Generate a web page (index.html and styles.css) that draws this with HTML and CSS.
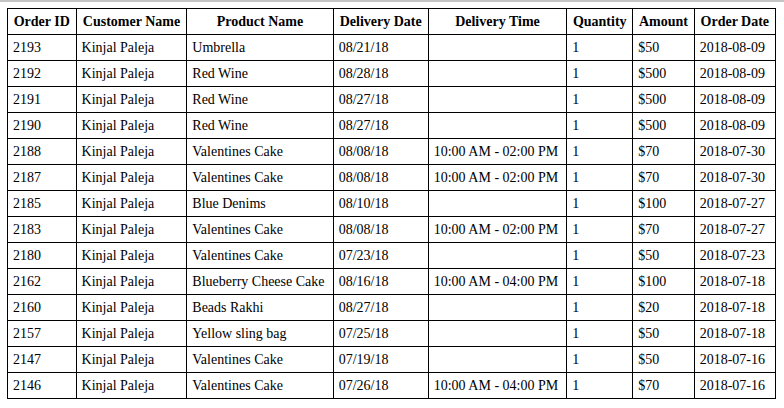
FILE: index.html
```html
<!DOCTYPE html>
<html>
<head>
<meta charset="utf-8">
<link rel="stylesheet" href="styles.css">
</head>
<body>
<div class="topbar"></div>
<table class="orders">
<thead>
<tr><th>Order ID</th><th>Customer Name</th><th>Product Name</th><th>Delivery Date</th><th>Delivery Time</th><th>Quantity</th><th>Amount</th><th>Order Date</th></tr>
</thead>
<tbody>
<tr><td>2193</td><td>Kinjal Paleja</td><td>Umbrella</td><td>08/21/18</td><td></td><td>1</td><td>$50</td><td>2018-08-09</td></tr>
<tr><td>2192</td><td>Kinjal Paleja</td><td>Red Wine</td><td>08/28/18</td><td></td><td>1</td><td>$500</td><td>2018-08-09</td></tr>
<tr><td>2191</td><td>Kinjal Paleja</td><td>Red Wine</td><td>08/27/18</td><td></td><td>1</td><td>$500</td><td>2018-08-09</td></tr>
<tr><td>2190</td><td>Kinjal Paleja</td><td>Red Wine</td><td>08/27/18</td><td></td><td>1</td><td>$500</td><td>2018-08-09</td></tr>
<tr><td>2188</td><td>Kinjal Paleja</td><td>Valentines Cake</td><td>08/08/18</td><td>10:00 AM - 02:00 PM</td><td>1</td><td>$70</td><td>2018-07-30</td></tr>
<tr><td>2187</td><td>Kinjal Paleja</td><td>Valentines Cake</td><td>08/08/18</td><td>10:00 AM - 02:00 PM</td><td>1</td><td>$70</td><td>2018-07-30</td></tr>
<tr><td>2185</td><td>Kinjal Paleja</td><td>Blue Denims</td><td>08/10/18</td><td></td><td>1</td><td>$100</td><td>2018-07-27</td></tr>
<tr><td>2183</td><td>Kinjal Paleja</td><td>Valentines Cake</td><td>08/08/18</td><td>10:00 AM - 02:00 PM</td><td>1</td><td>$70</td><td>2018-07-27</td></tr>
<tr><td>2180</td><td>Kinjal Paleja</td><td>Valentines Cake</td><td>07/23/18</td><td></td><td>1</td><td>$50</td><td>2018-07-23</td></tr>
<tr><td>2162</td><td>Kinjal Paleja</td><td>Blueberry Cheese Cake</td><td>08/16/18</td><td>10:00 AM - 04:00 PM</td><td>1</td><td>$100</td><td>2018-07-18</td></tr>
<tr><td>2160</td><td>Kinjal Paleja</td><td>Beads Rakhi</td><td>08/27/18</td><td></td><td>1</td><td>$20</td><td>2018-07-18</td></tr>
<tr><td>2157</td><td>Kinjal Paleja</td><td>Yellow sling bag</td><td>07/25/18</td><td></td><td>1</td><td>$50</td><td>2018-07-18</td></tr>
<tr><td>2147</td><td>Kinjal Paleja</td><td>Valentines Cake</td><td>07/19/18</td><td></td><td>1</td><td>$50</td><td>2018-07-16</td></tr>
<tr><td>2146</td><td>Kinjal Paleja</td><td>Valentines Cake</td><td>07/26/18</td><td>10:00 AM - 04:00 PM</td><td>1</td><td>$70</td><td>2018-07-16</td></tr>
</tbody>
</table>
</body>
</html>
```
FILE: styles.css
```css
html, body {
  margin: 0;
  padding: 0;
  background: #fff;
}
body {
  font-family: "Liberation Serif", "Times New Roman", serif;
  font-size: 14px;
  color: #000;
  padding: 0 9px 0 7px;
}
.topbar {
  height: 2px;
  background: #c4c4c4;
  margin: 0 -9px 6px -7px;
}
.orders {
  border-collapse: collapse;
  width: 769px;
}
.orders th,
.orders td {
  border: 1px solid #000;
  height: 26px;
  padding: 0 5px;
  box-sizing: border-box;
  white-space: nowrap;
}
.orders th {
  font-weight: bold;
  text-align: center;
}
.orders td {
  text-align: left;
}
```
